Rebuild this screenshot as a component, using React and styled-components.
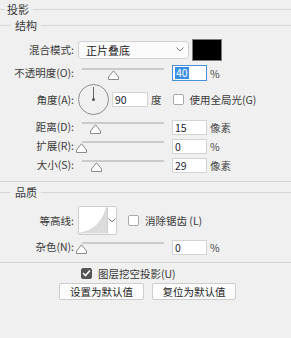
import React from 'react';
import styled, { createGlobalStyle } from 'styled-components';

const GlobalStyle = createGlobalStyle`
  html, body { margin: 0; padding: 0; background: #f0f0f0; }
  body {
    font-family: 'Noto Sans CJK SC', 'Noto Sans', sans-serif;
    font-size: 10.5px;
    color: #3a3a3a;
  }
`;

const Panel = styled.div`
  width: 291px;
  height: 338px;
  box-sizing: border-box;
  padding-top: 3px;
  display: flex;
  flex-direction: column;
  background: #f0f0f0;
  overflow: hidden;
`;

const Legend = styled.div`
  display: flex;
  align-items: center;
  height: 12px;
  line-height: 12px;
  font-size: 11px;
  margin-top: ${p => p.mt || 0}px;
  &::before {
    content: '';
    width: ${p => p.lead}px;
    height: 1px;
    background: #d6d6d6;
    margin-right: ${p => p.gap}px;
  }
  &::after {
    content: '';
    flex: 1;
    height: 1px;
    background: #d6d6d6;
    margin-left: 4px;
  }
`;

const Row = styled.div`
  display: flex;
  align-items: center;
  height: ${p => p.h || 16}px;
  margin-top: ${p => p.mt || 0}px;
  padding-left: ${p => p.pl || 0}px;
  white-space: nowrap;
`;

const Label = styled.div`
  width: 74px;
  flex-shrink: 0;
  text-align: right;
  line-height: 14px;
`;

const Select = styled.div`
  margin-left: 4px;
  width: 111px;
  height: 18px;
  box-sizing: border-box;
  border: 1px solid #d2d2d2;
  border-radius: 3px;
  background: #fbfbfb;
  display: flex;
  align-items: center;
  justify-content: space-between;
  padding: 0 4px 0 7px;
  color: #222;
  font-size: 11px;
`;

const Swatch = styled.div`
  margin-left: 3px;
  width: 30px;
  height: 22px;
  box-sizing: border-box;
  border: 1px solid #7c7c7c;
  background: #000;
`;

const SliderWrap = styled.div`
  position: relative;
  width: 88px;
  height: 16px;
  margin-left: 2px;
  flex-shrink: 0;
`;

const Track = styled.div`
  position: absolute;
  left: 6px;
  right: 0;
  top: 3px;
  height: 2px;
  background: #cbcbcb;
`;

const Thumb = styled.svg`
  position: absolute;
  top: 5px;
`;

const NumInput = styled.div`
  margin-left: ${p => p.ml ?? 8}px;
  width: ${p => p.w || 35}px;
  height: ${p => p.hh || 15}px;
  box-sizing: border-box;
  border: 1px solid ${p => (p.focus ? '#4a8fdc' : '#d4d4d4')};
  background: #fff;
  display: flex;
  align-items: center;
  padding-left: 2px;
  color: #223;
  flex-shrink: 0;
`;

const Selected = styled.span`
  background: #3a8ee6;
  color: #fff;
  padding: 0 1px;
  line-height: 12px;
`;

const Unit = styled.span`
  margin-left: ${p => p.ml ?? 3}px;
  color: #444;
`;

const Dial = styled.div`
  position: relative;
  margin-left: 4px;
  width: 31px;
  height: 31px;
  box-sizing: border-box;
  border: 1px solid #8e8e8e;
  border-radius: 50%;
  flex-shrink: 0;
  &::before {
    content: '';
    position: absolute;
    left: 14px;
    top: 2px;
    width: 1px;
    height: 13px;
    background: #666;
  }
  &::after {
    content: '';
    position: absolute;
    left: 13px;
    top: 13px;
    width: 3px;
    height: 3px;
    border-radius: 50%;
    background: #555;
  }
`;

const Check = styled.div`
  margin-left: ${p => p.ml || 0}px;
  width: 11px;
  height: 11px;
  box-sizing: border-box;
  border: 1px solid ${p => (p.checked ? '#555' : '#a8a8a8')};
  border-radius: 2px;
  background: ${p => (p.checked ? '#555' : '#fff')};
  display: flex;
  align-items: center;
  justify-content: center;
  flex-shrink: 0;
`;

const CheckText = styled.span`
  margin-left: ${p => p.ml || 6}px;
`;

const Contour = styled.div`
  margin-left: 4px;
  width: 39px;
  height: 29px;
  box-sizing: border-box;
  border: 1px solid #cfcfcf;
  border-radius: 2px;
  background: #fff;
  display: flex;
  flex-shrink: 0;
`;

const ContourPreview = styled.svg`
  width: 29px;
  height: 27px;
  display: block;
`;

const ContourArrow = styled.div`
  flex: 1;
  border-left: 1px solid #cfcfcf;
  display: flex;
  align-items: center;
  justify-content: center;
`;

const Separator = styled.div`
  margin-top: ${p => p.mt || 0}px;
  height: 1px;
  background: #d4d4d4;
  flex-shrink: 0;
`;

const ButtonRow = styled.div`
  display: flex;
  gap: 8px;
  margin-top: 4px;
  padding-left: 59px;
`;

const Button = styled.div`
  width: ${p => p.w}px;
  height: 17px;
  box-sizing: border-box;
  border: 1px solid #cdcdcd;
  border-radius: 2px;
  background: #fcfcfc;
  display: flex;
  align-items: center;
  justify-content: center;
  color: #222;
`;

const Chevron = () => (
  <svg width="8" height="5" viewBox="0 0 8 5">
    <path d="M0.5 0.5 L4 4 L7.5 0.5" fill="none" stroke="#777" strokeWidth="1" />
  </svg>
);

const Tick = () => (
  <svg width="9" height="8" viewBox="0 0 9 8">
    <path d="M1 4 L3.5 6.5 L8 1.5" fill="none" stroke="#fff" strokeWidth="1.6" />
  </svg>
);

const Slider = ({ at }) => (
  <SliderWrap>
    <Track />
    <Thumb width="11" height="10" viewBox="0 0 11 10" style={{ left: at - 76 - 5.5 }}>
      <path
        d="M0.5 9.5 L0.5 7 L5.5 0.8 L10.5 7 L10.5 9.5 Z"
        fill="#fff"
        stroke="#8a8a8a"
        strokeLinejoin="round"
      />
    </Thumb>
  </SliderWrap>
);

const SliderRow = ({ label, at, value, unit, mt, h, focus }) => (
  <Row mt={mt} h={h}>
    <Label>{label}</Label>
    <Slider at={at} />
    <NumInput focus={focus} hh={focus ? 16 : 15}>
      {focus ? <Selected>{value}</Selected> : value}
    </NumInput>
    <Unit>{unit}</Unit>
  </Row>
);

export default function App() {
  return (
    <Panel>
      <GlobalStyle />
      <Legend lead={5} gap={2}>投影</Legend>
      <Legend lead={10} gap={5} mt={4}>结构</Legend>

      <Row h={23} mt={7}>
        <Label>混合模式:</Label>
        <Select>
          <span>正片叠底</span>
          <Chevron />
        </Select>
        <Swatch />
      </Row>

      <SliderRow label="不透明度(O):" at={113} value="40" unit="%" mt={3} h={18} focus />

      <Row h={31} mt={2}>
        <Label>角度(A):</Label>
        <Dial />
        <NumInput ml={3} w={36}>90</NumInput>
        <Unit>度</Unit>
        <Check ml={11} />
        <CheckText>使用全局光(G)</CheckText>
      </Row>

      <SliderRow label="距离(D):" at={95} value="15" unit="像素" mt={4} />
      <SliderRow label="扩展(R):" at={81} value="0" unit="%" mt={3} />
      <SliderRow label="大小(S):" at={96} value="29" unit="像素" mt={3} />

      <Separator mt={8} />
      <Legend lead={10} gap={5} mt={4}>品质</Legend>

      <Row h={29} mt={8}>
        <Label>等高线:</Label>
        <Contour>
          <ContourPreview viewBox="0 0 29 27">
            <path d="M0 27 Q22 24 29 0 L29 27 Z" fill="#dcdcdc" />
            <path d="M0 27 Q22 24 29 0" fill="none" stroke="#c4c4c4" strokeWidth="0.8" />
          </ContourPreview>
          <ContourArrow>
            <Chevron />
          </ContourArrow>
        </Contour>
        <Check ml={11} />
        <CheckText>消除锯齿 (L)</CheckText>
      </Row>

      <SliderRow label="杂色(N):" at={81} value="0" unit="%" mt={4} />

      <Separator mt={7} />

      <Row h={12} mt={4} pl={81}>
        <Check checked>
          <Tick />
        </Check>
        <CheckText>图层挖空投影(U)</CheckText>
      </Row>

      <ButtonRow>
        <Button w={85}>设置为默认值</Button>
        <Button w={84}>复位为默认值</Button>
      </ButtonRow>
    </Panel>
  );
}
